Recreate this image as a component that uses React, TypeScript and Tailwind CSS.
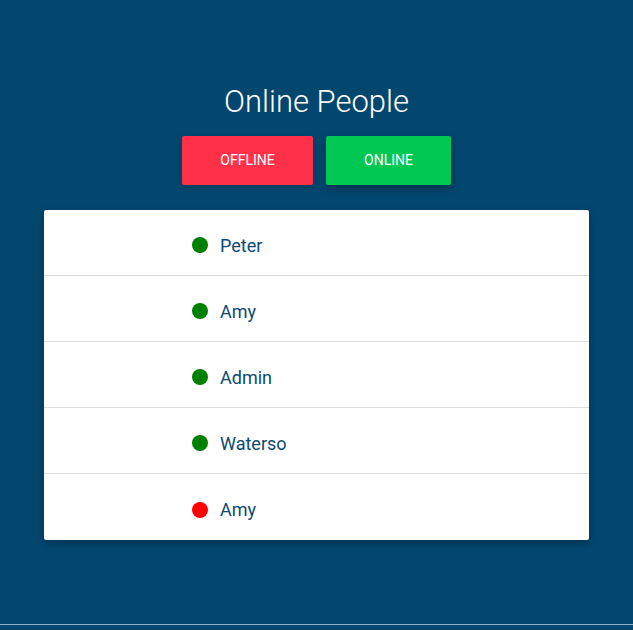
const people = [
  { name: "Peter", online: true },
  { name: "Amy", online: true },
  { name: "Admin", online: true },
  { name: "Waterso", online: true },
  { name: "Amy", online: false },
];

export default function App() {
  return (
    <div className="min-h-[630px] bg-[#03476f] font-['Roboto',sans-serif]">
      <div className="h-[625px] border-b border-[#8fb0c8] flex flex-col items-center pt-[84px]">
        <h1 className="text-[31px] font-light text-white leading-[36px]">Online People</h1>

        <div className="flex gap-[13px] mt-[16px]">
          <button className="w-[131px] h-[49px] rounded-[2px] bg-[#ff3048] text-white text-[14px] uppercase shadow-[0_2px_6px_rgba(0,0,0,0.2)]">
            Offline
          </button>
          <button className="w-[125px] h-[49px] rounded-[2px] bg-[#00c853] text-white text-[14px] uppercase shadow-[0_4px_10px_rgba(0,0,0,0.3)]">
            Online
          </button>
        </div>

        <ul className="w-[545px] mt-[25px] bg-white rounded-[2px] shadow-[0_3px_8px_rgba(0,0,0,0.3)]">
          {people.map((p, i) => (
            <li
              key={i}
              className={`h-[66px] flex items-center pl-[148px] pt-[5px] gap-[12px] ${i < people.length - 1 ? "border-b border-[#dddddd]" : ""}`}
            >
              <span className={`w-4 h-4 rounded-full ${p.online ? "bg-[#008000]" : "bg-[#ff0000]"}`}></span>
              <span className="text-[18px] text-[#0b4a73]">{p.name}</span>
            </li>
          ))}
        </ul>
      </div>
    </div>
  );
}
